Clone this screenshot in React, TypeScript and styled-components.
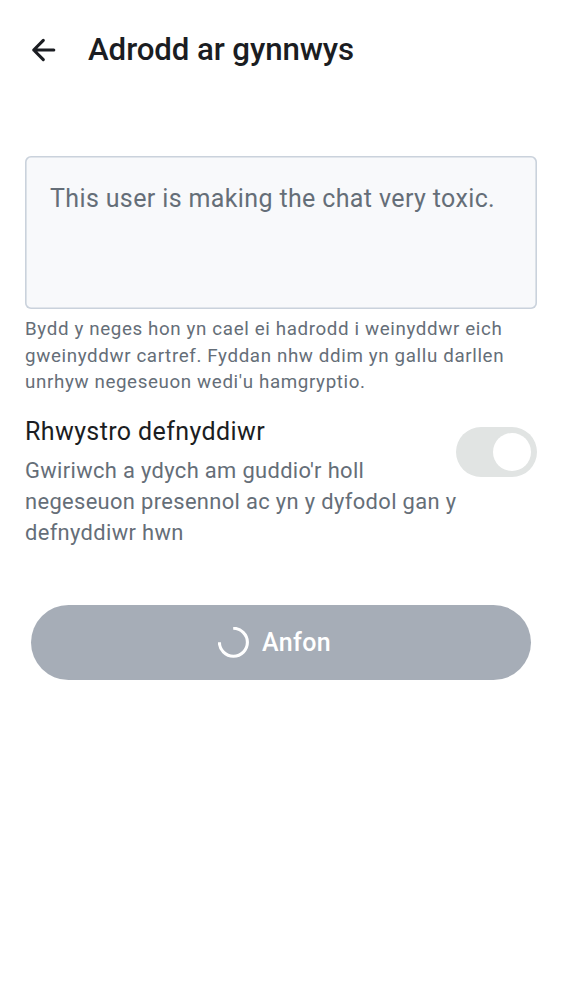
import React from "react";
import styled, { createGlobalStyle } from "styled-components";

const GlobalStyle = createGlobalStyle`
  * { box-sizing: border-box; }
  body { margin: 0; background: #fff; font-family: Roboto, sans-serif; }
`;
const Screen = styled.main`
  width: 562px;
  height: 1000px;
  background: #fff;
  color: #1b1d22;
`;
const TopBar = styled.header`
  display: flex;
  align-items: center;
  height: 100px;
  padding-left: 25px;
  gap: 25px;
`;
const BackButton = styled.button`
  display: flex;
  width: 38px;
  height: 38px;
  padding: 0;
  border: 0;
  background: none;
  color: #1b1d22;
`;
const Title = styled.h1`
  margin: 0;
  font-size: 31.25px;
  line-height: 40px;
  font-weight: 500;
  letter-spacing: -0.1px;
  white-space: nowrap;
`;
const Content = styled.section`
  display: flex;
  flex-direction: column;
  padding: 56px 25px 0;
`;
const Message = styled.div`
  height: 153px;
  padding: 24px 25px;
  border-radius: 6px;
  box-shadow: inset 0 0 0 1.6px #cad2dc;
  background: #f8f9fb;
  color: #656e78;
  font-size: 25px;
  line-height: 37.5px;
  letter-spacing: 0.37px;
  white-space: nowrap;
`;
const Hint = styled.p`
  margin: 7px 0 0;
  color: #656e78;
  font-size: 18.75px;
  line-height: 26.6px;
  letter-spacing: 0.63px;
  white-space: pre-line;
`;
const OptionRow = styled.div`
  display: flex;
  justify-content: space-between;
  margin-top: 17.2px;
`;
const OptionCopy = styled.div`
  width: 0;
  flex: 1;
`;
const OptionTitle = styled.h2`
  margin: 0;
  font-size: 25px;
  font-weight: 400;
  line-height: 37.5px;
  letter-spacing: 0.39px;
`;
const OptionText = styled.p`
  margin: 4.3px 0 0;
  color: #656e78;
  font-size: 21.9px;
  line-height: 31.25px;
  letter-spacing: 0.35px;
  white-space: pre;
`;
const Switch = styled.div`
  display: flex;
  justify-content: flex-end;
  width: 81px;
  height: 50px;
  margin-top: 14px;
  padding: 6px;
  border-radius: 25px;
  background: #e1e4e3;
`;
const Thumb = styled.span`
  width: 38px;
  height: 38px;
  border-radius: 50%;
  background: #fff;
`;
const SendButton = styled.button`
  display: flex;
  align-items: center;
  justify-content: center;
  gap: 12px;
  height: 75px;
  margin: 56.7px 6px 0;
  padding: 0 13px 0 0;
  border: 0;
  border-radius: 38px;
  background: #a6adb7;
  color: #fff;
  font: 500 25px/37.5px Roboto, sans-serif;
  letter-spacing: 0.4px;
`;

export default function App() {
  return (
    <Screen>
      <GlobalStyle />
      <TopBar>
        <BackButton aria-label="Yn ôl">
          <svg width="38" height="38" viewBox="0 0 38 38" fill="none" stroke="currentColor" strokeWidth="3.1" strokeLinecap="round" strokeLinejoin="round">
            <path d="M28.8 19H8.8M18.3 9.4L8.7 19l9.6 9.6" />
          </svg>
        </BackButton>
        <Title>Adrodd ar gynnwys</Title>
      </TopBar>
      <Content>
        <Message>This user is making the chat very toxic.</Message>
        <Hint>{"Bydd y neges hon yn cael ei hadrodd i weinyddwr eich\ngweinyddwr cartref. Fyddan nhw ddim yn gallu darllen\nunrhyw negeseuon wedi'u hamgryptio."}</Hint>
        <OptionRow>
          <OptionCopy>
            <OptionTitle>Rhwystro defnyddiwr</OptionTitle>
            <OptionText>{"Gwiriwch a ydych am guddio'r holl\nnegeseuon presennol ac yn y dyfodol gan y\ndefnyddiwr hwn"}</OptionText>
          </OptionCopy>
          <Switch role="switch" aria-checked="true"><Thumb /></Switch>
        </OptionRow>
        <SendButton>
          <svg width="32" height="32" viewBox="0 0 32 32" fill="none" stroke="#fff" strokeWidth="3.1">
            <path d="M15.2 1.3A14 14 0 1 1 1.4 15.3" />
          </svg>
          Anfon
        </SendButton>
      </Content>
    </Screen>
  );
}
